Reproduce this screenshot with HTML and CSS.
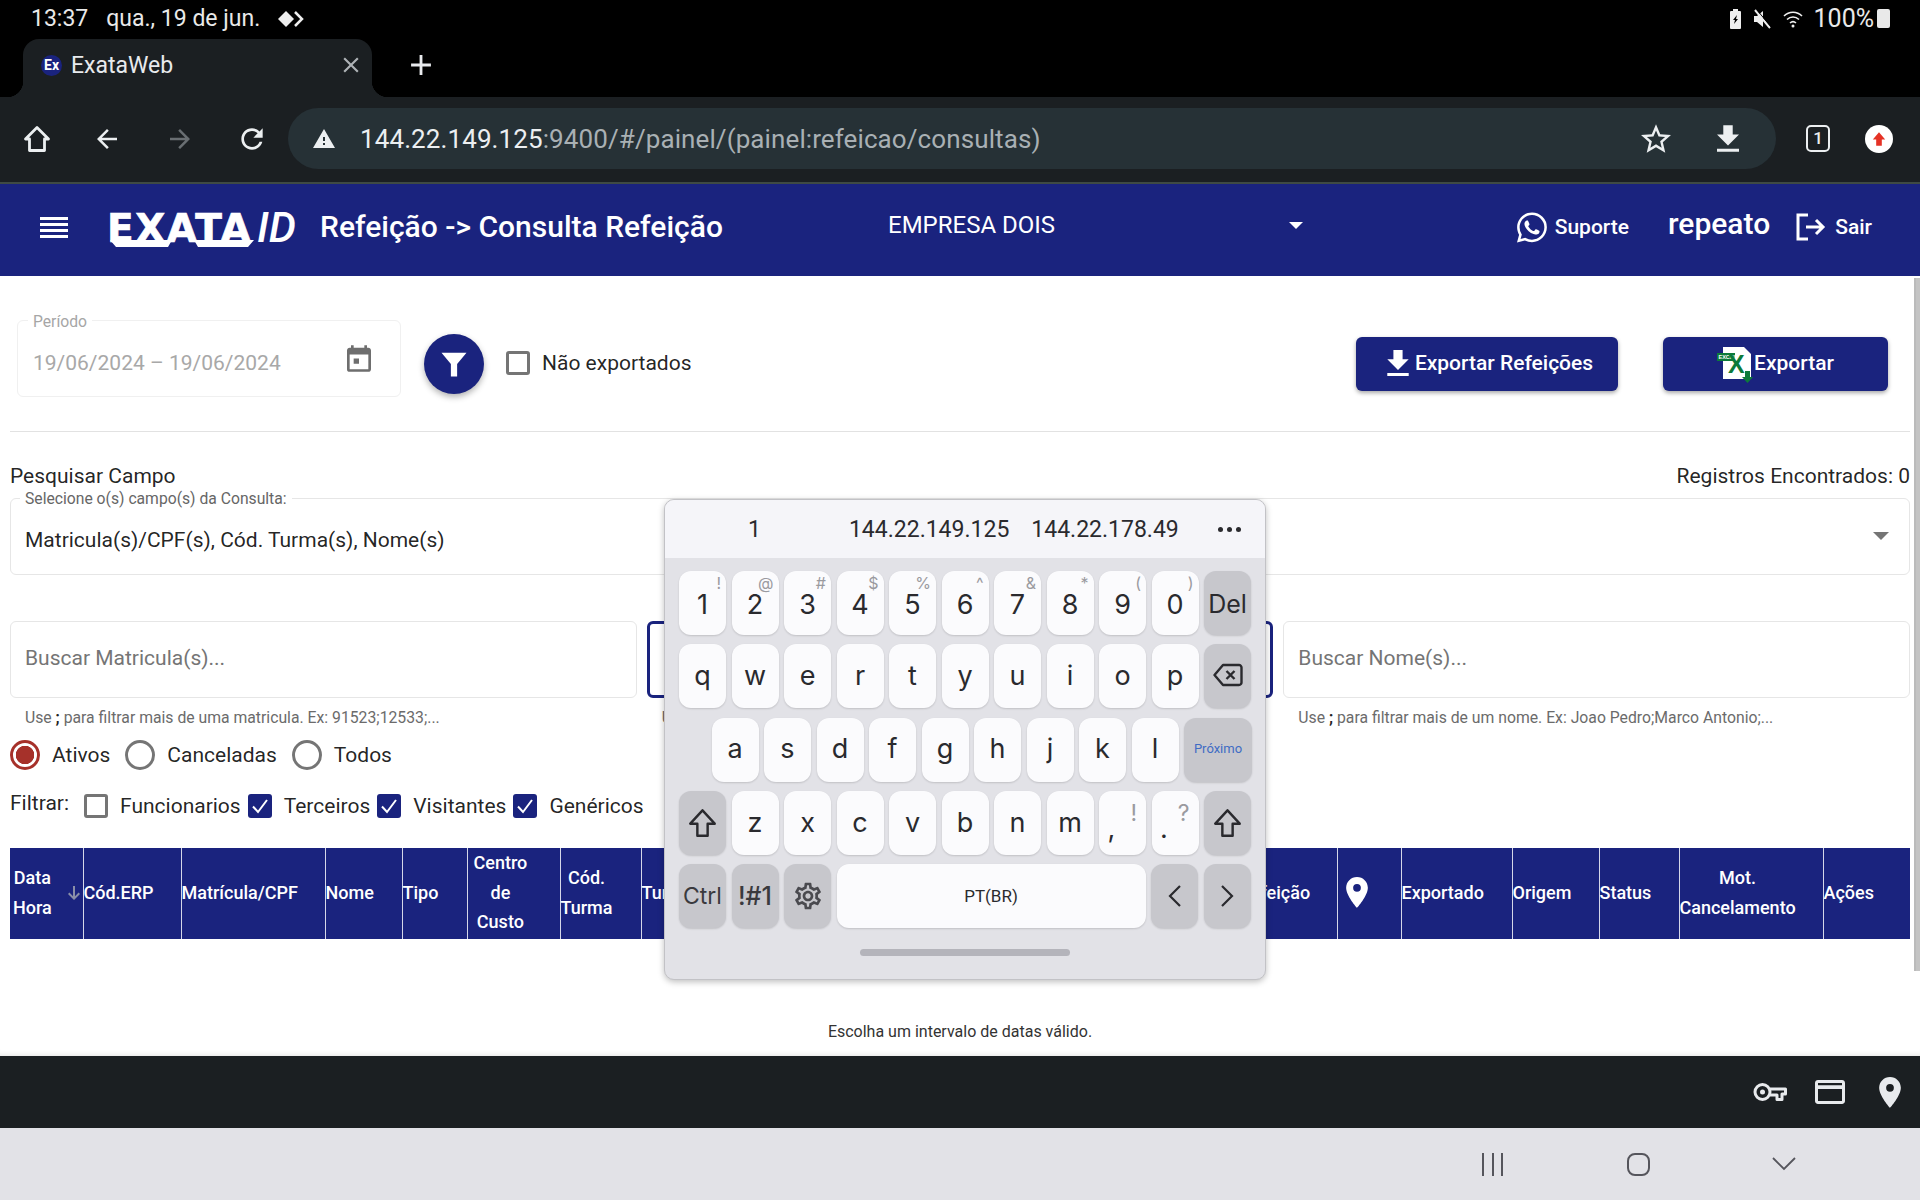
FILE: index.html
```html
<!DOCTYPE html>
<html lang="pt-BR">
<head>
    <meta charset="UTF-8">
    <meta name="viewport" content="width=device-width, initial-scale=1.0">
    <title>ExataWeb</title>
    <link rel="stylesheet" href="styles.css">
</head>
<body>
    <!-- Icon sprite -->
    <svg class="sprite" xmlns="http://www.w3.org/2000/svg">
        <symbol id="i-pin" viewBox="5 2 14 20"><path fill-rule="evenodd" d="M12 2C8.13 2 5 5.13 5 9c0 5.25 7 13 7 13s7-7.75 7-13c0-3.87-3.13-7-7-7zm0 9.5a2.5 2.5 0 0 1 0-5 2.5 2.5 0 0 1 0 5z"/></symbol>
        <symbol id="i-download" viewBox="5 3 14 17"><path d="M19 9h-4V3H9v6H5l7 7 7-7zM5 18v2h14v-2H5z"/></symbol>
        <symbol id="i-shift" viewBox="1.5 1.5 21 21" preserveAspectRatio="none"><path fill="none" stroke="currentColor" stroke-width="1.9" stroke-linejoin="round" d="M12 2.5 2.5 12.5H8v9h8v-9h5.500z"/></symbol>
    </svg>

    <!-- Android status bar -->
    <div class="status-bar">
        <span class="status-time">13:37</span>
        <span class="status-date">qua., 19 de jun.</span>
        <svg class="status-diamonds" viewBox="0 0 26 18"><path fill="#eee" d="M8 1l8 8-8 8-8-8z"/><path fill="none" stroke="#eee" stroke-width="2.500" d="M17 2l7 7-7 7"/></svg>
        <div class="status-right">
            <svg class="status-ico" width="11" height="20" viewBox="0 0 11 20"><path fill="#eee" d="M3 0h5v2h2a1 1 0 0 1 1 1v16a1 1 0 0 1-1 1H1a1 1 0 0 1-1-1V3a1 1 0 0 1 1-1h2z"/><path fill="#000" d="M7 6 3 11h2l-1 4 4-5H6z"/></svg>
            <svg class="status-ico" width="20" height="20" viewBox="0 0 20 20"><path fill="#eee" d="M2 7h3l6-5v16l-6-5H2z"/><path stroke="#eee" stroke-width="2" d="M3 1l15 18"/><path stroke="#000" stroke-width="1" d="M5 1l15 18"/></svg>
            <svg class="status-ico" width="20" height="18" viewBox="0 0 20 18"><g fill="none" stroke="#eee" stroke-width="1.600"><path d="M1 6c5-5 13-5 18 0"/><path d="M4 9.500c3.500-3.300 8.500-3.300 12 0"/><path d="M7 13c1.800-1.600 4.200-1.600 6 0"/></g><circle cx="10" cy="16" r="1.500" fill="#eee"/></svg>
            <span class="status-pct">100%</span>
            <span class="status-battery"></span>
        </div>
    </div>

    <!-- Chrome tab strip -->
    <div class="tab-strip">
        <div class="tab">
            <span class="favicon">Ex</span>
            <span class="tab-title">ExataWeb</span>
            <svg class="tab-close" viewBox="0 0 24 24"><path d="M19 6.410 17.590 5 12 10.590 6.410 5 5 6.410 10.590 12 5 17.590 6.410 19 12 13.410 17.590 19 19 17.590 13.410 12z"/></svg>
        </div>
        <svg class="tab-new" viewBox="0 0 24 24"><path d="M19 13h-6v6h-2v-6H5v-2h6V5h2v6h6v2z"/></svg>
    </div>

    <!-- Chrome toolbar -->
    <div class="toolbar">
        <svg class="tool-ico tool-home" viewBox="0 0 28 28"><path fill="none" stroke="#eceff1" stroke-width="2.800" stroke-linejoin="round" d="M14 2.500 2.500 14H6.500v11.500h15V14h4z"/></svg>
        <svg class="tool-ico tool-back" viewBox="0 0 24 24"><path d="M20 11H7.830l5.590-5.590L12 4l-8 8 8 8 1.410-1.410L7.830 13H20v-2z"/></svg>
        <svg class="tool-ico tool-fwd" viewBox="0 0 24 24"><path d="M12 4l-1.410 1.410L16.170 11H4v2h12.170l-5.580 5.590L12 20l8-8z"/></svg>
        <svg class="tool-ico tool-reload" viewBox="0 0 24 24"><path d="M17.650 6.350C16.200 4.900 14.210 4 12 4c-4.420 0-7.990 3.580-7.990 8s3.570 8 7.990 8c3.730 0 6.840-2.550 7.730-6h-2.080c-.82 2.330-3.040 4-5.650 4-3.310 0-6-2.690-6-6s2.690-6 6-6c1.660 0 3.140.69 4.220 1.780L13 11h7V4l-2.350 2.350z"/></svg>
        <div class="url-bar">
            <svg class="url-warn" viewBox="1 2 22 19"><path fill-rule="evenodd" d="M1 21h22L12 2 1 21zm12-3h-2v-2h2v2zm0-4h-2v-4h2v4z"/></svg>
            <span class="url-text"><span class="url-host">144.22.149.125</span>:9400/#/painel/(painel:refeicao/consultas)</span>
            <svg class="url-star" viewBox="2 2 20 19"><path d="M22 9.240l-7.190-.62L12 2 9.190 8.630 2 9.240l5.460 4.730L5.820 21 12 17.270 18.180 21l-1.630-7.030L22 9.240zM12 15.400l-3.760 2.270 1-4.280-3.320-2.880 4.380-.38L12 6.100l1.710 4.040 4.380.38-3.320 2.880 1 4.280L12 15.400z"/></svg>
            <svg class="url-download"><use href="#i-download"/></svg>
        </div>
        <span class="tab-count">1</span>
        <span class="profile">
            <svg viewBox="0 0 16 16"><path fill="#e53225" d="M8 2 2.500 8.500H5.500V14h5V8.500h3z"/></svg>
        </span>
    </div>

    <!-- App header -->
    <header class="app-header">
        <div class="burger"><i></i><i></i><i></i><i></i></div>
        <div class="logo">
            <div class="logo-text"><span class="logo-exata">EXATA</span><span class="logo-id">ID</span></div>
            <svg class="logo-swoosh" viewBox="0 0 146 7"><path fill="#fff" d="M0 0h62l-4 7H6zM84 0h60l-6 7H88z"/></svg>
        </div>
        <h1 class="app-title">Refeição -&gt; Consulta Refeição</h1>
        <div class="company">
            <span>EMPRESA DOIS</span>
            <i class="caret"></i>
        </div>
        <a class="head-link head-support">
            <svg class="wa" viewBox="0 0 16 16"><path fill="#fff" d="M13.601 2.326A7.854 7.854 0 0 0 7.994 0C3.627 0 .068 3.558.064 7.926c0 1.399.366 2.760 1.057 3.965L0 16l4.204-1.102a7.933 7.933 0 0 0 3.790.965h.004c4.368 0 7.926-3.558 7.930-7.930A7.898 7.898 0 0 0 13.600 2.326zM7.994 14.521a6.573 6.573 0 0 1-3.356-.92l-.24-.144-2.494.654.666-2.433-.156-.251a6.560 6.560 0 0 1-1.007-3.505c0-3.626 2.957-6.584 6.591-6.584a6.560 6.560 0 0 1 4.660 1.931 6.557 6.557 0 0 1 1.928 4.660c-.004 3.639-2.961 6.592-6.592 6.592zm3.615-4.934c-.197-.099-1.170-.578-1.353-.646-.182-.065-.315-.099-.445.099-.133.197-.513.646-.627.775-.114.133-.232.148-.43.050-.197-.1-.836-.308-1.592-.985-.59-.525-.985-1.175-1.103-1.372-.114-.198-.011-.304.088-.403.087-.088.197-.232.296-.346.1-.114.133-.198.198-.33.065-.134.034-.248-.015-.347-.05-.099-.445-1.076-.612-1.470-.16-.389-.323-.335-.445-.34-.114-.007-.247-.007-.38-.007a.729.729 0 0 0-.529.247c-.182.198-.691.677-.691 1.654 0 .977.710 1.916.810 2.049.098.133 1.394 2.132 3.383 2.992.470.205.840.326 1.129.418.475.152.904.129 1.246.080.380-.058 1.171-.480 1.338-.943.164-.464.164-.860.114-.943-.049-.084-.182-.133-.38-.232z"/></svg>
            <span>Suporte</span>
        </a>
        <span class="head-user">repeato</span>
        <a class="head-link head-exit">
            <svg class="exit" viewBox="0 0 30 30"><path fill="none" stroke="#fff" stroke-width="3" d="M12 3H2v24h10M10 15h17M20 8l7 7-7 7"/></svg>
            <span>Sair</span>
        </a>
    </header>

    <div class="page">
        <main class="content">
            <!-- Filtro de periodo e exportacao -->
            <section class="top-row">
                <div class="outlined date-field">
                    <span class="float-label">Período</span>
                    <span class="date-value">19/06/2024 – 19/06/2024</span>
                    <svg class="cal" viewBox="3 1 18 20"><path fill-rule="evenodd" d="M19 3h-1V1h-2v2H8V1H6v2H5c-1.110 0-2 .9-2 2v14a2 2 0 0 0 2 2h14c1.100 0 2-.9 2-2V5c0-1.100-.9-2-2-2zm0 16H5V8h14v11zM8 11h4v4H8z"/></svg>
                </div>
                <button class="fab">
                    <svg viewBox="0 0 24 24"><path fill="#fff" d="M2 3h20l-7.500 9v10h-5V12z"/></svg>
                </button>
                <label class="check top-check"><span class="box"></span>Não exportados</label>
                <div class="top-actions">
                    <button class="btn btn-refeicoes">
                        <svg class="btn-dl"><use href="#i-download"/></svg>
                        Exportar Refeições
                    </button>
                    <button class="btn btn-exportar">
                        <svg class="xls" viewBox="0 0 36 36">
                            <path fill="#fff" d="M6 0h21l7 7v25H6z"/>
                            <rect x="0" y="6" width="18" height="8" fill="#0d7a3a"/>
                            <text x="1.500" y="12.300" class="xls-tag">EXCEL</text>
                            <text x="11" y="26" class="xls-x">X</text>
                            <path fill="#0d7a3a" d="M28 24h5v6h3l-5.500 6-5.500-6h3z"/>
                        </svg>
                        Exportar
                    </button>
                </div>
            </section>

            <hr class="divider">

            <div class="search-head">
                <span>Pesquisar Campo</span>
                <span>Registros Encontrados: 0</span>
            </div>

            <div class="outlined select-field">
                <span class="float-label float-label-dark">Selecione o(s) campo(s) da Consulta:</span>
                <span class="select-value">Matricula(s)/CPF(s), Cód. Turma(s), Nome(s)</span>
                <i class="caret caret-gray"></i>
            </div>

            <section class="search-grid">
                <div>
                    <div class="outlined input-field">Buscar Matricula(s)...</div>
                    <p class="hint">Use <b>;</b> para filtrar mais de uma matricula. Ex: 91523;12533;...</p>
                </div>
                <div>
                    <div class="outlined input-field input-focus">Buscar Cód. Turma(s)...</div>
                    <p class="hint">Use <b>;</b> para filtrar mais de uma turma. Ex: 1;2;...</p>
                </div>
                <div>
                    <div class="outlined input-field">Buscar Nome(s)...</div>
                    <p class="hint">Use <b>;</b> para filtrar mais de um nome. Ex: Joao Pedro;Marco Antonio;...</p>
                </div>
            </section>

            <div class="radio-row">
                <label class="radio radio-on"><span class="dot"></span>Ativos</label>
                <label class="radio"><span class="dot"></span>Canceladas</label>
                <label class="radio"><span class="dot"></span>Todos</label>
            </div>

            <div class="filter-row">
                <span class="filter-label">Filtrar:</span>
                <label class="check"><span class="box"></span>Funcionarios</label>
                <label class="check check-on"><span class="box"><svg viewBox="0 0 24 24"><path fill="none" stroke="#fff" stroke-width="2" d="M5 12.500l5 5.500 9-12"/></svg></span>Terceiros</label>
                <label class="check check-on"><span class="box"><svg viewBox="0 0 24 24"><path fill="none" stroke="#fff" stroke-width="2" d="M5 12.500l5 5.500 9-12"/></svg></span>Visitantes</label>
                <label class="check check-on"><span class="box"><svg viewBox="0 0 24 24"><path fill="none" stroke="#fff" stroke-width="2" d="M5 12.500l5 5.500 9-12"/></svg></span>Genéricos</label>
            </div>

            <table class="grid">
                <colgroup>
                    <col class="c-data"><col class="c-erp"><col class="c-mat"><col class="c-nome"><col class="c-tipo">
                    <col class="c-centro"><col class="c-turma"><col class="c-turno"><col class="c-ref"><col class="c-pin">
                    <col class="c-exp"><col class="c-orig"><col class="c-status"><col class="c-mot"><col class="c-acoes">
                </colgroup>
                <thead>
                    <tr>
                        <th><div class="th-sort"><span class="th-stack">Data<br>Hora</span><svg class="sort" viewBox="0 0 16 16"><path fill="#8a8fa8" d="M7 1h2v10.200l3.600-3.600L14 9l-6 6-6-6 1.400-1.400L7 11.200z"/></svg></div></th>
                        <th>Cód.ERP</th>
                        <th>Matrícula/CPF</th>
                        <th>Nome</th>
                        <th>Tipo</th>
                        <th class="th-centro"><span class="th-stack">Centro<br>de<br>Custo</span></th>
                        <th><span class="th-stack">Cód.<br>Turma</span></th>
                        <th>Turno</th>
                        <th>Refeição</th>
                        <th class="th-pin"><svg class="pin"><use href="#i-pin"/></svg></th>
                        <th>Exportado</th>
                        <th>Origem</th>
                        <th>Status</th>
                        <th><span class="th-stack">Mot.<br>Cancelamento</span></th>
                        <th class="th-last">Ações</th>
                    </tr>
                </thead>
            </table>

            <p class="empty-msg">Escolha um intervalo de datas válido.</p>
        </main>
        <div class="scroll-track"><div class="scroll-thumb"></div></div>
    </div>

    <!-- Chrome autofill bar -->
    <div class="fill-bar">
        <svg class="fill-key" viewBox="0 0 34 20"><g fill="none" stroke="#e8eaed" stroke-width="3"><circle cx="9.500" cy="10" r="7.500"/></g><circle cx="9.500" cy="10" r="2.500" fill="#e8eaed"/><path fill="none" stroke="#e8eaed" stroke-width="3" stroke-linejoin="round" d="M17 7h15.500v5H29v5.500h-5V13h-7"/></svg>
        <svg class="fill-card" viewBox="2 4 20 16"><path fill-rule="evenodd" fill="#e8eaed" d="M20 4H4c-1.110 0-1.990.89-1.990 2L2 18c0 1.110.89 2 2 2h16c1.110 0 2-.89 2-2V6c0-1.110-.89-2-2-2zm0 14H4v-8h16v8zm0-10.500H4V6h16v1.500z"/></svg>
        <svg class="fill-pin"><use href="#i-pin"/></svg>
    </div>

    <!-- Android nav bar -->
    <nav class="nav-bar">
        <span class="nav-recent"><i></i><i></i><i></i></span>
        <span class="nav-home"></span>
        <svg class="nav-back" viewBox="0 0 24 14"><path fill="none" stroke="#55555c" stroke-width="1.800" d="M1 1l11 11L23 1"/></svg>
    </nav>

    <!-- Floating keyboard -->
    <div class="keyboard">
        <div class="kb-suggest">
            <span class="sg sg-one">1</span>
            <span class="sg sg-two">144.22.149.125</span>
            <span class="sg sg-three">144.22.178.49</span>
            <span class="sg-dots"><i></i><i></i><i></i></span>
        </div>
        <div class="kb-keys">
            <div class="kb-row kb-row-num">
                <span class="key">1<i class="sup">!</i></span>
                <span class="key">2<i class="sup">@</i></span>
                <span class="key">3<i class="sup">#</i></span>
                <span class="key">4<i class="sup">$</i></span>
                <span class="key">5<i class="sup">%</i></span>
                <span class="key">6<i class="sup">^</i></span>
                <span class="key">7<i class="sup">&amp;</i></span>
                <span class="key">8<i class="sup">*</i></span>
                <span class="key">9<i class="sup">(</i></span>
                <span class="key">0<i class="sup">)</i></span>
                <span class="key key-mod key-del">Del</span>
            </div>
            <div class="kb-row kb-row-up">
                <span class="key">q</span><span class="key">w</span><span class="key">e</span><span class="key">r</span><span class="key">t</span>
                <span class="key">y</span><span class="key">u</span><span class="key">i</span><span class="key">o</span><span class="key">p</span>
                <span class="key key-mod">
                    <svg class="kb-ico kb-back" viewBox="0 0 30 24"><path fill="none" stroke="#2a2a2e" stroke-width="2.400" stroke-linejoin="round" d="M10 2h16a2.500 2.500 0 0 1 2.500 2.500v15A2.500 2.500 0 0 1 26 22H10L1.500 12z"/><path fill="none" stroke="#2a2a2e" stroke-width="2.400" d="M13.500 8l8 8M21.500 8l-8 8"/></svg>
                </span>
            </div>
            <div class="kb-row kb-row-home kb-row-up">
                <span class="key">a</span><span class="key">s</span><span class="key">d</span><span class="key">f</span><span class="key">g</span>
                <span class="key">h</span><span class="key">j</span><span class="key">k</span><span class="key">l</span>
                <span class="key key-mod key-next">Próximo</span>
            </div>
            <div class="kb-row">
                <span class="key key-mod"><svg class="kb-ico kb-shift"><use href="#i-shift"/></svg></span>
                <span class="key">z</span><span class="key">x</span><span class="key">c</span><span class="key">v</span>
                <span class="key">b</span><span class="key">n</span><span class="key">m</span>
                <span class="key key-punct">,<i class="sup sup-big">!</i></span>
                <span class="key key-punct">.<i class="sup sup-big">?</i></span>
                <span class="key key-mod"><svg class="kb-ico kb-shift"><use href="#i-shift"/></svg></span>
            </div>
            <div class="kb-row">
                <span class="key key-mod key-small">Ctrl</span>
                <span class="key key-mod key-sym">!#1</span>
                <span class="key key-mod">
                    <svg class="kb-ico kb-gear" viewBox="0 0 24 24"><path fill="#4a4a4f" fill-rule="evenodd" d="M19.430 12.980c.04-.32.07-.64.07-.98 0-.34-.03-.66-.07-.98l2.110-1.650c.19-.15.24-.42.12-.64l-2-3.460c-.09-.16-.26-.25-.44-.25-.06 0-.12.01-.17.03l-2.490 1c-.52-.4-1.080-.73-1.690-.98l-.38-2.650C14.460 2.180 14.250 2 14 2h-4c-.25 0-.46.18-.49.42l-.38 2.650c-.61.25-1.170.59-1.690.98l-2.490-1c-.06-.02-.12-.03-.18-.03-.17 0-.34.09-.43.25l-2 3.460c-.13.22-.07.49.12.64l2.110 1.650c-.04.32-.07.65-.07.98 0 .33.03.66.07.98l-2.110 1.650c-.19.15-.24.42-.12.64l2 3.460c.09.16.26.25.44.25.06 0 .12-.01.17-.03l2.490-1c.52.4 1.080.73 1.690.98l.38 2.650c.03.24.24.42.49.42h4c.25 0 .46-.18.49-.42l.38-2.650c.61-.25 1.170-.59 1.690-.98l2.490 1c.06.02.12.03.18.03.17 0 .34-.09.43-.25l2-3.460c.12-.22.07-.49-.12-.64l-2.110-1.650zm-1.980-1.710c.04.31.05.52.05.73 0 .21-.02.43-.05.73l-.14 1.130.89.7 1.080.84-.7 1.210-1.270-.51-1.040-.42-.9.68c-.43.32-.84.56-1.250.73l-1.060.43-.16 1.130-.2 1.350h-1.400l-.19-1.350-.16-1.130-1.060-.43c-.43-.18-.83-.41-1.230-.71l-.91-.7-1.060.43-1.270.51-.7-1.210 1.080-.84.89-.7-.14-1.130c-.03-.31-.05-.54-.05-.74s.02-.43.05-.73l.14-1.130-.89-.7-1.080-.84.7-1.210 1.270.51 1.040.42.9-.68c.43-.32.84-.56 1.250-.73l1.060-.43.16-1.130.2-1.350h1.390l.19 1.350.16 1.130 1.060.43c.43.18.83.41 1.230.71l.91.7 1.060-.43 1.270-.51.7 1.210-1.070.85-.89.7.14 1.130zM12 8c-2.210 0-4 1.790-4 4s1.790 4 4 4 4-1.790 4-4-1.790-4-4-4zm0 6c-1.100 0-2-.9-2-2s.9-2 2-2 2 .9 2 2-.9 2-2 2z"/></svg>
                </span>
                <span class="key key-space">PT(BR)</span>
                <span class="key key-mod"><svg class="kb-ico kb-chev" viewBox="0 0 14 24"><path fill="none" stroke="#2a2a2e" stroke-width="2.200" d="M12 2 2 12l10 10"/></svg></span>
                <span class="key key-mod"><svg class="kb-ico kb-chev" viewBox="0 0 14 24"><path fill="none" stroke="#2a2a2e" stroke-width="2.200" d="M2 2l10 10L2 22"/></svg></span>
            </div>
            <div class="kb-handle"></div>
        </div>
    </div>
</body>
</html>
```

FILE: styles.css
```css
* {
    margin: 0;
    padding: 0;
    box-sizing: border-box;
}

html, body {
    width: 1920px;
    height: 1200px;
    overflow: hidden;
}

body {
    position: relative;
    display: flex;
    flex-direction: column;
    background: #ffffff;
    font-family: Roboto, "Liberation Sans", sans-serif;
    color: rgba(0, 0, 0, 0.87);
}

.sprite {
    display: none;
}

/* Status bar */
.status-bar {
    height: 39px;
    flex: none;
    display: flex;
    align-items: center;
    background: #000000;
    color: #e9e9e9;
    padding: 0 30px 2px 31px;
    font-size: 23px;
}

.status-date {
    margin-left: 18px;
}

.status-diamonds {
    width: 26px;
    height: 18px;
    margin-left: 18px;
}

.status-right {
    margin-left: auto;
    display: flex;
    align-items: center;
}

.status-ico {
    margin-right: 11px;
}

.status-pct {
    font-size: 25px;
}

.status-battery {
    width: 13px;
    height: 19px;
    margin-left: 3px;
    background: #e9e9e9;
    border-radius: 2px;
}

/* Tabs */
.tab-strip {
    height: 58px;
    flex: none;
    display: flex;
    align-items: center;
    background: #000000;
    padding-left: 23px;
}

.tab {
    position: relative;
    width: 349px;
    height: 58px;
    display: flex;
    align-items: center;
    background: #1b1f22;
    border-radius: 16px 16px 0 0;
    padding: 0 8px 6px 18px;
    color: #e8eaed;
}

.tab::before,
.tab::after {
    content: "";
    position: absolute;
    bottom: 0;
    width: 16px;
    height: 16px;
}

.tab::before {
    left: -16px;
    background: radial-gradient(circle at 0 0, transparent 16px, #1b1f22 16.500px);
}

.tab::after {
    right: -16px;
    background: radial-gradient(circle at 100% 0, transparent 16px, #1b1f22 16.500px);
}

.favicon {
    width: 21px;
    height: 21px;
    border-radius: 50%;
    background: #1a237e;
    color: #ffffff;
    font-size: 14px;
    font-weight: 700;
    text-align: center;
    line-height: 21px;
}

.tab-title {
    margin-left: 9px;
    font-size: 23px;
}

.tab-close {
    width: 26px;
    height: 26px;
    margin-left: auto;
    fill: #aeb2b6;
}

.tab-new {
    width: 34px;
    height: 34px;
    margin: 0 0 6px 32px;
    fill: #e8eaed;
}

/* Toolbar */
.toolbar {
    height: 87px;
    flex: none;
    display: flex;
    align-items: center;
    background: #1b1f22;
    border-bottom: 2px solid #3f4a44;
    padding: 0 27px 2px 23px;
}

.tool-ico {
    width: 28px;
    height: 28px;
    fill: #eceff1;
    flex: none;
}

.tool-back {
    width: 30px;
    height: 30px;
    margin-left: 41px;
}

.tool-fwd {
    width: 30px;
    height: 30px;
    margin-left: 43px;
    fill: #696e72;
}

.tool-reload {
    width: 32px;
    height: 32px;
    margin-left: 41px;
}

.url-bar {
    width: 1488px;
    height: 61px;
    margin-left: 20px;
    flex: none;
    display: flex;
    align-items: center;
    background: #263136;
    border-radius: 31px;
    padding-left: 25px;
}

.url-warn {
    width: 22px;
    height: 19px;
    fill: #eceff1;
}

.url-text {
    margin-left: 25px;
    font-size: 26px;
    color: #a9b0b4;
    letter-spacing: 0.1px;
}

.url-host {
    color: #eceff1;
}

.url-star {
    width: 30px;
    height: 29px;
    margin-left: auto;
    fill: #eceff1;
}

.url-download {
    width: 22px;
    height: 27px;
    margin: 0 37px 0 46px;
    fill: #eceff1;
}

.tab-count {
    width: 26px;
    height: 27px;
    margin-left: 30px;
    border: 2px solid #eceff1;
    border-radius: 5px;
    color: #eceff1;
    font-size: 17px;
    font-weight: 500;
    text-align: center;
    line-height: 23px;
}

.profile {
    width: 28px;
    height: 28px;
    margin-left: 35px;
    background: #ffffff;
    border-radius: 50%;
    padding: 5px;
    display: flex;
}

/* App header */
.app-header {
    height: 92px;
    flex: none;
    display: flex;
    align-items: center;
    background: #1a237e;
    color: #ffffff;
    padding: 0 0 6px 40px;
}

.burger {
    width: 28px;
    display: flex;
    flex-direction: column;
    gap: 3px;
}

.burger i {
    display: block;
    height: 3px;
    background: #ffffff;
}

.logo {
    margin: 3px 0 0 39px;
    width: 190px;
    flex: none;
    display: flex;
    flex-direction: column;
}

.logo-text {
    display: flex;
    align-items: baseline;
    height: 29px;
    line-height: 32px;
}

.logo-exata {
    font-family: "DejaVu Sans", sans-serif;
    font-weight: 700;
    font-size: 39px;
    letter-spacing: 1.5px;
    -webkit-text-stroke: 0.7px #ffffff;
    width: 150px;
}

.logo-id {
    font-family: Roboto, sans-serif;
    font-style: italic;
    font-weight: 500;
    font-size: 43px;
}

.logo-swoosh {
    width: 146px;
    height: 7px;
    margin-left: 3px;
}

.app-title {
    width: 568px;
    flex: none;
    margin: -2px 0 0 23px;
    font-size: 30px;
    font-weight: 500;
    white-space: nowrap;
}

.company {
    width: 415px;
    flex: none;
    display: flex;
    align-items: center;
    justify-content: space-between;
    font-size: 24px;
    margin-top: -4px;
}

.caret {
    width: 0;
    height: 0;
    border-left: 7px solid transparent;
    border-right: 7px solid transparent;
    border-top: 7px solid #ffffff;
}

.head-link {
    display: flex;
    align-items: center;
    font-size: 21px;
    font-weight: 500;
}

.head-support {
    margin-left: auto;
}

.wa {
    width: 30px;
    height: 31px;
    margin-right: 8px;
}

.head-user {
    margin: -8px 0 0 39px;
    font-size: 30px;
    font-weight: 500;
}

.head-exit {
    margin: 0 48px 0 26px;
}

.exit {
    width: 30px;
    height: 30px;
    margin-right: 9px;
}

/* Page */
.page {
    flex: 1;
    min-height: 0;
    display: flex;
    box-shadow: inset 0 -6px 6px -6px rgba(0, 0, 0, 0.15);
}

.content {
    flex: 1;
    min-width: 0;
    padding: 44px 4px 0 10px;
}

.scroll-track {
    width: 6px;
    flex: none;
}

.scroll-thumb {
    height: 693px;
    margin-top: 2px;
    background: #c4c4c4;
    border-left: 2px solid #bbbbbb;
}

.top-row {
    height: 77px;
    display: flex;
    align-items: center;
}

.outlined {
    position: relative;
    border: 1px solid #e6e6e6;
    border-radius: 6px;
    background: #ffffff;
}

.float-label {
    position: absolute;
    left: 10px;
    top: -8px;
    padding: 0 5px;
    background: #ffffff;
    font-size: 15.700px;
    line-height: 18px;
    color: #a6a6a6;
}

.float-label-dark {
    left: 9px;
    top: -9px;
    color: #666666;
}

.date-field {
    width: 384px;
    height: 77px;
    margin-left: 7px;
    display: flex;
    align-items: center;
    border-color: #f0f0f0;
    padding: 0 29px 0 15px;
    font-size: 21px;
    color: #a8a8a8;
}

.date-value {
    margin-top: 9px;
}

.cal {
    width: 24px;
    height: 27px;
    margin: -1px 0 0 auto;
    fill: #6e6e6e;
}

.fab {
    width: 60px;
    height: 60px;
    margin: 11px 0 0 23px;
    border: none;
    border-radius: 50%;
    background: #1a237e;
    padding: 15px;
    box-shadow: 0 3px 6px rgba(0, 0, 0, 0.3);
    flex: none;
}

.check {
    display: flex;
    align-items: center;
    font-size: 21px;
}

.box {
    width: 24px;
    height: 24px;
    margin-right: 12px;
    border: 3px solid #757575;
    border-radius: 3px;
    flex: none;
}

.top-check {
    margin: 8px 0 0 22px;
}

.top-actions {
    margin: 11px 22px 0 auto;
    display: flex;
    gap: 45px;
}

.btn {
    height: 54px;
    display: flex;
    align-items: center;
    justify-content: center;
    border: none;
    border-radius: 6px;
    background: #1a237e;
    color: #ffffff;
    font-family: inherit;
    font-size: 21px;
    font-weight: 500;
    padding-bottom: 2px;
    box-shadow: 0 2px 4px rgba(0, 0, 0, 0.35);
}

.btn-refeicoes {
    width: 262px;
    padding-left: 6px;
}

.btn-exportar {
    width: 225px;
}

.btn-dl {
    width: 22px;
    height: 26px;
    margin-right: 6px;
    fill: #ffffff;
}

.xls {
    width: 36px;
    height: 36px;
    margin: 4px 1px 0 0;
}

.xls-tag {
    font-family: "Liberation Sans", sans-serif;
    font-size: 5.500px;
    font-weight: 700;
    fill: #ffffff;
}

.xls-x {
    font-family: "Liberation Sans", sans-serif;
    font-size: 25px;
    font-weight: 700;
    fill: #0d7a3a;
}

.divider {
    margin-top: 34px;
    border: none;
    border-top: 1px solid #e2e2e2;
}

.search-head {
    margin-top: 31px;
    height: 26px;
    display: flex;
    align-items: center;
    justify-content: space-between;
    font-size: 21px;
}

.select-field {
    height: 77px;
    margin-top: 9px;
    display: flex;
    align-items: center;
    justify-content: space-between;
    padding: 0 20px 0 14px;
    font-size: 21px;
}

.select-value {
    margin-top: 6px;
}

.caret-gray {
    border-top-color: #757575;
    border-left-width: 8px;
    border-right-width: 8px;
    border-top-width: 8px;
    margin-top: -2px;
}

.search-grid {
    margin-top: 46px;
    display: grid;
    grid-template-columns: repeat(3, 1fr);
    gap: 10px;
}

.input-field {
    height: 77px;
    display: flex;
    align-items: center;
    padding: 0 0 3px 14px;
    font-size: 21px;
    color: #757575;
}

.input-focus {
    border: 3px solid #1a237e;
}

.hint {
    margin-top: 11px;
    padding-left: 15px;
    font-size: 15.750px;
    line-height: 18px;
    color: #6b6b6b;
}

.hint b {
    color: #222222;
}

.radio-row {
    margin-top: 13px;
    height: 30px;
    display: flex;
    align-items: center;
    gap: 15px;
    font-size: 21px;
}

.radio {
    display: flex;
    align-items: center;
}

.dot {
    width: 30px;
    height: 30px;
    margin-right: 12px;
    border: 3px solid #757575;
    border-radius: 50%;
}

.radio-on .dot {
    border-color: #a6312a;
    background: radial-gradient(circle, #a6312a 0 9px, #ffffff 9.500px);
}

.filter-row {
    margin-top: 21px;
    height: 30px;
    display: flex;
    align-items: center;
    font-size: 21px;
}

.filter-label {
    width: 74px;
    margin-top: -6px;
}

.filter-row .check {
    margin-right: 7px;
}

.check-on .box {
    border: none;
    background: #1a237e;
}

.check-on .box svg {
    display: block;
}

/* Table */
.grid {
    margin-top: 27px;
    width: 1900px;
    table-layout: fixed;
    border-collapse: collapse;
}

.c-data { width: 73px; }
.c-erp { width: 98px; }
.c-mat { width: 144px; }
.c-nome { width: 77px; }
.c-tipo { width: 65px; }
.c-centro { width: 93px; }
.c-turma { width: 81px; }
.c-turno { width: 598px; }
.c-ref { width: 98px; }
.c-pin { width: 64px; }
.c-exp { width: 111px; }
.c-orig { width: 87px; }
.c-status { width: 80px; }
.c-mot { width: 144px; }
.c-acoes { width: 87px; }

.grid th {
    height: 91px;
    background: #1a237e;
    border-right: 1px solid #d5d7e8;
    color: #ffffff;
    font-size: 18px;
    font-weight: 500;
    line-height: 29.500px;
    text-align: left;
    white-space: nowrap;
    padding: 0 0 2px;
}

.grid th.th-last {
    border-right: none;
}

.th-stack {
    display: inline-block;
    text-align: center;
    vertical-align: middle;
}

.th-sort {
    display: flex;
    align-items: center;
    padding-left: 3px;
}

.sort {
    width: 16px;
    height: 16px;
    margin-left: 14px;
}

.grid th.th-centro {
    padding-left: 6px;
}

.grid th.th-pin {
    padding-left: 8px;
}

.pin {
    width: 22px;
    height: 31px;
    display: block;
    fill: #ffffff;
}

.empty-msg {
    margin-top: 84px;
    text-align: center;
    font-size: 16px;
    line-height: 18px;
    color: #333333;
}

/* Bottom bars */
.fill-bar {
    height: 72px;
    flex: none;
    display: flex;
    align-items: center;
    justify-content: flex-end;
    background: #1b1f22;
    padding-right: 19px;
}

.fill-key {
    width: 34px;
    height: 20px;
}

.fill-card {
    width: 30px;
    height: 24px;
    margin-left: 28px;
}

.fill-pin {
    width: 22px;
    height: 31px;
    margin-left: 34px;
    fill: #e8eaed;
}

.nav-bar {
    height: 72px;
    flex: none;
    display: flex;
    align-items: center;
    background: #e2e2e7;
    padding-left: 1482px;
}

.nav-recent {
    width: 21px;
    height: 23px;
    display: flex;
    justify-content: space-between;
}

.nav-recent i {
    width: 2px;
    background: #55555c;
}

.nav-home {
    width: 23px;
    height: 23px;
    margin-left: 124px;
    border: 2px solid #55555c;
    border-radius: 8px;
}

.nav-back {
    width: 24px;
    height: 14px;
    margin-left: 122px;
}

/* Keyboard */
.keyboard {
    position: absolute;
    left: 664px;
    top: 499px;
    width: 602px;
    height: 481px;
    display: flex;
    flex-direction: column;
    background: #e2e2e7;
    border: 1px solid #c2c2c6;
    border-radius: 10px;
    box-shadow: 0 2px 6px rgba(0, 0, 0, 0.25);
    overflow: hidden;
    font-family: Inter, "Noto Sans", sans-serif;
    color: #2a2a2e;
}

.kb-suggest {
    height: 58px;
    flex: none;
    display: flex;
    align-items: center;
    background: #f5f5f9;
    font-family: Roboto, sans-serif;
    font-size: 23px;
}

.sg-one { margin-left: 83px; }
.sg-two { margin-left: 88px; }
.sg-three { margin-left: 22px; }

.sg-dots {
    margin-left: 39px;
    display: flex;
    gap: 4px;
}

.sg-dots i {
    width: 5px;
    height: 5px;
    border-radius: 50%;
    background: #2a2a2e;
}

.kb-keys {
    padding: 13px 14px 0;
    display: flex;
    flex-direction: column;
    gap: 9.250px;
}

.kb-row {
    display: flex;
    gap: 5.500px;
}

.kb-row-home {
    padding-left: 32.500px;
}

.key {
    position: relative;
    width: 47px;
    height: 64px;
    flex: none;
    display: flex;
    align-items: center;
    justify-content: center;
    background: #fbfbfd;
    border-radius: 12px;
    box-shadow: 0 1px 2px rgba(0, 0, 0, 0.15);
    font-size: 27px;
}

.kb-row-num .key {
    padding-top: 2px;
}

.kb-row-up .key {
    padding-bottom: 2px;
}

.key-mod {
    background: #c7c7cc;
}

.key-del {
    font-size: 25px;
}

.key-small {
    font-size: 23px;
    color: #3a3a3e;
}

.key-sym {
    font-size: 25px;
    font-weight: 500;
    color: #3a3a3e;
}

.key-next {
    width: 68px;
    font-family: Roboto, sans-serif;
    font-size: 13px;
    color: #3f6cc4;
}

.key-space {
    width: 309px;
    font-family: Roboto, sans-serif;
    font-size: 17px;
}

.key-punct {
    padding: 12px 22px 0 0;
}

.sup {
    position: absolute;
    top: 3px;
    right: 5px;
    font-style: normal;
    font-size: 16px;
    line-height: 18px;
    color: #9a9a9f;
}

.sup-big {
    top: 10px;
    right: 9px;
    font-size: 23px;
    line-height: 24px;
}

.kb-ico {
    display: block;
}

.kb-back {
    width: 30px;
    height: 24px;
}

.kb-shift {
    width: 27px;
    height: 28px;
    color: #2a2a2e;
}

.kb-gear {
    width: 32px;
    height: 32px;
}

.kb-chev {
    width: 14px;
    height: 24px;
}

.kb-handle {
    width: 210px;
    height: 7px;
    margin: 12px auto 0;
    background: #b4b4bb;
    border-radius: 4px;
}
```
